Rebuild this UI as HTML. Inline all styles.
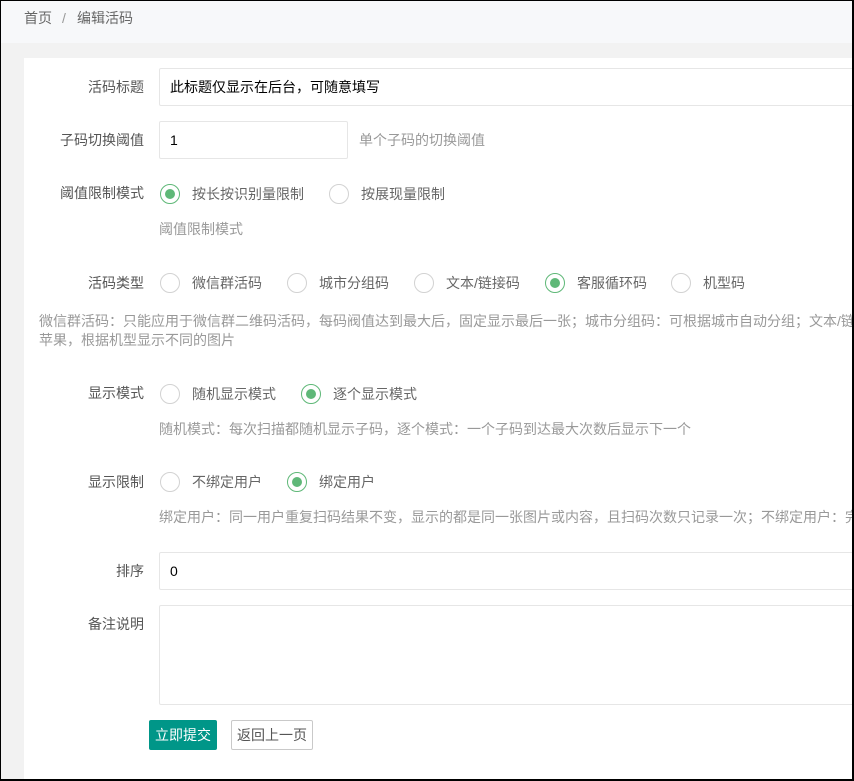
<!DOCTYPE html>
<html><head><meta charset="utf-8"><style>
*{box-sizing:border-box;margin:0;padding:0}
html,body{width:854px;height:781px;overflow:hidden}
body{background:#f2f2f2;font-family:"Liberation Sans","Noto Sans CJK SC",sans-serif;font-size:14px;color:#333;position:relative}
#w{position:absolute;left:0;top:0;width:854px;height:781px;overflow:hidden}
.frame{position:absolute;left:0;top:0;width:854px;height:781px;border:1px solid #000;border-right:2px solid #000;border-bottom:2px solid #000;pointer-events:none;z-index:9}
.bc{position:absolute;left:0;top:0;width:854px;height:43px;background:#f7f8fa;color:#666;}
.bc span{position:absolute;top:9px;line-height:18px}
.card{position:absolute;left:24px;top:58px;width:830px;height:723px;background:#fff}
.a{position:absolute;white-space:nowrap}
.lbl{position:absolute;left:4px;width:140px;text-align:right;color:#555;line-height:20px}
.in{position:absolute;left:159px;height:38px;border:1px solid #e6e6e6;border-radius:2px;background:#fff;padding-left:10px;line-height:36px;color:#000;width:700px}
.help{color:#999;line-height:20px}
.r{position:absolute;width:20px;height:20px;border:1px solid #d2d2d2;border-radius:50%;background:#fff}
.r.on{border-color:#5fb878}
.r.on::after{content:"";position:absolute;left:4px;top:4px;width:10px;height:10px;border-radius:50%;background:#5fb878}
.rt{color:#666;line-height:20px}
</style></head><body><div id="w">
<div class="bc"><span style="left:24px">首页</span><span style="left:62px;color:#999">/</span><span style="left:77px;color:#666">编辑活码</span></div>
<div class="card"></div>

<div class="lbl" style="top:77px">活码标题</div>
<div class="in" style="top:68px">此标题仅显示在后台，可随意填写</div>

<div class="lbl" style="top:130px">子码切换阈值</div>
<div class="in" style="top:121px;width:189px">1</div>
<div class="a help" style="left:359px;top:130px">单个子码的切换阈值</div>

<div class="lbl" style="top:183px">阈值限制模式</div>
<div class="r on" style="left:160px;top:184px"></div><div class="a rt" style="left:192px;top:184px">按长按识别量限制</div>
<div class="r" style="left:329px;top:184px"></div><div class="a rt" style="left:361px;top:184px">按展现量限制</div>
<div class="a help" style="left:159px;top:219px">阈值限制模式</div>

<div class="lbl" style="top:273px">活码类型</div>
<div class="r" style="left:160px;top:273px"></div><div class="a rt" style="left:192px;top:273px">微信群活码</div>
<div class="r" style="left:287px;top:273px"></div><div class="a rt" style="left:319px;top:273px">城市分组码</div>
<div class="r" style="left:414px;top:273px"></div><div class="a rt" style="left:446px;top:273px">文本/链接码</div>
<div class="r on" style="left:545px;top:273px"></div><div class="a rt" style="left:577px;top:273px">客服循环码</div>
<div class="r" style="left:671px;top:273px"></div><div class="a rt" style="left:703px;top:273px">机型码</div>
<div class="a help" style="left:39px;top:311px">微信群活码：只能应用于微信群二维码活码，每码阀值达到最大后，固定显示最后一张；城市分组码：可根据城市自动分组；文本/链接码</div>
<div class="a help" style="left:39px;top:330px">苹果，根据机型显示不同的图片</div>

<div class="lbl" style="top:383px">显示模式</div>
<div class="r" style="left:160px;top:384px"></div><div class="a rt" style="left:192px;top:384px">随机显示模式</div>
<div class="r on" style="left:301px;top:384px"></div><div class="a rt" style="left:333px;top:384px">逐个显示模式</div>
<div class="a help" style="left:159px;top:419px">随机模式：每次扫描都随机显示子码，逐个模式：一个子码到达最大次数后显示下一个</div>

<div class="lbl" style="top:472px">显示限制</div>
<div class="r" style="left:160px;top:472px"></div><div class="a rt" style="left:192px;top:472px">不绑定用户</div>
<div class="r on" style="left:287px;top:472px"></div><div class="a rt" style="left:319px;top:472px">绑定用户</div>
<div class="a help" style="left:159px;top:507px">绑定用户：同一用户重复扫码结果不变，显示的都是同一张图片或内容，且扫码次数只记录一次；不绑定用户：完全随机</div>

<div class="lbl" style="top:561px">排序</div>
<div class="in" style="top:552px">0</div>

<div class="lbl" style="top:614px">备注说明</div>
<div class="in" style="top:605px;height:100px"></div>

<div class="a" style="left:149px;top:720px;width:68px;height:30px;background:#009688;border-radius:2px;color:#fff;text-align:center;line-height:30px">立即提交</div>
<div class="a" style="left:231px;top:720px;width:82px;height:30px;border:1px solid #c9c9c9;border-radius:2px;color:#555;text-align:center;line-height:28px;background:#fff">返回上一页</div>
<div class="frame"></div>
</div></body></html>
